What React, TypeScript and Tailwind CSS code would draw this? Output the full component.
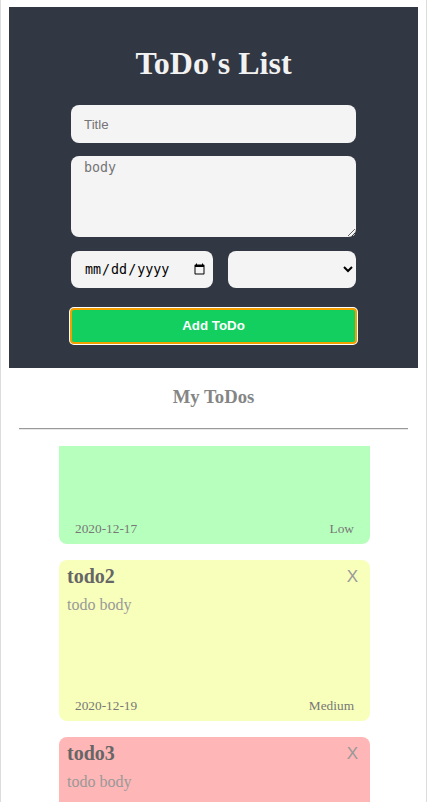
import { useEffect, useRef } from 'react'

type Todo = {
  id: number
  title: string
  body: string
  date: string
  priority: 'Low' | 'Medium' | 'High'
}

const TODOS: Todo[] = [
  { id: 1, title: 'todo1', body: 'todo body', date: '2020-12-17', priority: 'Low' },
  { id: 2, title: 'todo2', body: 'todo body', date: '2020-12-19', priority: 'Medium' },
  { id: 3, title: 'todo3', body: 'todo body', date: '2020-12-21', priority: 'High' },
]

const PRIORITY_BG: Record<string, string> = {
  Low: 'bg-[#b7ffbd]',
  Medium: 'bg-[#f8ffbb]',
  High: 'bg-[#ffb6b6]',
}

export default function App() {
  const listRef = useRef<HTMLDivElement>(null)

  // the list is shown scrolled a bit down
  useEffect(() => {
    if (listRef.current) listRef.current.scrollTop = 63
  }, [])

  return (
    <div className="w-[427px] min-h-screen border-x border-[#dcdcdc] bg-white px-2 pt-[7px] font-['Liberation_Serif',serif]">
      {/* Form */}
      <div className="bg-[#313743] pt-[38px] pb-[24px] flex flex-col items-center">
        <h1 className="text-[32px] font-bold leading-[37px] text-[#f2f2f2] mb-[23px]">ToDo's List</h1>
        <form className="w-[285px] flex flex-col" onSubmit={(e) => e.preventDefault()}>
          <input
            type="text"
            placeholder="Title"
            className="h-[38px] rounded-lg bg-[#f4f4f4] px-[13px] text-[13.33px] font-['Liberation_Sans',sans-serif] placeholder:text-[#757575] outline-none"
          />
          <textarea
            placeholder="body"
            className="mt-[13px] h-[81px] rounded-lg bg-[#f4f4f4] px-[13px] py-[2px] text-[13.33px] font-['DejaVu_Sans_Mono',monospace] placeholder:text-[#757575] outline-none"
          />
          <div className="mt-[14px] flex gap-[15px]">
            <input
              type="date"
              className="h-[37px] w-[142px] rounded-lg bg-[#f4f4f4] pl-[13px] pr-[5px] text-[13.33px] font-['DejaVu_Sans_Mono',monospace] text-black outline-none"
            />
            <select className="h-[37px] flex-1 rounded-lg bg-[#f4f4f4] px-2 text-[13.33px] font-['Liberation_Sans',sans-serif] outline-none">
              <option value=""></option>
              <option>Low</option>
              <option>Medium</option>
              <option>High</option>
            </select>
          </div>
          <button
            type="submit"
            className="mt-5 -mx-[1px] h-[36px] rounded-[4px] border-2 border-[#f2a000] ring-1 ring-white bg-[#12cf5f] text-[13.33px] font-bold text-white font-['Liberation_Sans',sans-serif]"
          >
            Add ToDo
          </button>
        </form>
      </div>

      {/* List */}
      <h2 className="mt-[18px] text-center text-[18.72px] leading-[22px] font-bold text-[#858585]">My ToDos</h2>
      <hr className="mx-[10px] mt-[20px] border-t border-b border-t-[#9a9a9a] border-b-[#e8e8e8]" />
      <div ref={listRef} className="mt-4 h-[356px] overflow-hidden">
        <div className="w-[311px] ml-[50px] flex flex-col gap-4 pb-4">
          {TODOS.map((todo) => (
            <TodoCard key={todo.id} todo={todo} />
          ))}
        </div>
      </div>
    </div>
  )
}

function TodoCard({ todo }: { todo: Todo }) {
  return (
    <div className={`h-[161px] rounded-lg flex flex-col pt-[5px] pb-2 ${PRIORITY_BG[todo.priority]}`}>
      <div className="flex items-start justify-between pl-2 pr-3">
        <span className="text-[20px] leading-[23px] font-bold text-[#666]">{todo.title}</span>
        <span className="text-[17px] leading-[23px] text-[#999] font-['Liberation_Sans',sans-serif]">X</span>
      </div>
      <p className="mt-2 pl-2 text-[16px] leading-[18px] text-[#999]">{todo.body}</p>
      <div className="mt-auto flex justify-between px-4 text-[13.33px] leading-[15px] text-[#777]">
        <span>{todo.date}</span>
        <span>{todo.priority}</span>
      </div>
    </div>
  )
}
